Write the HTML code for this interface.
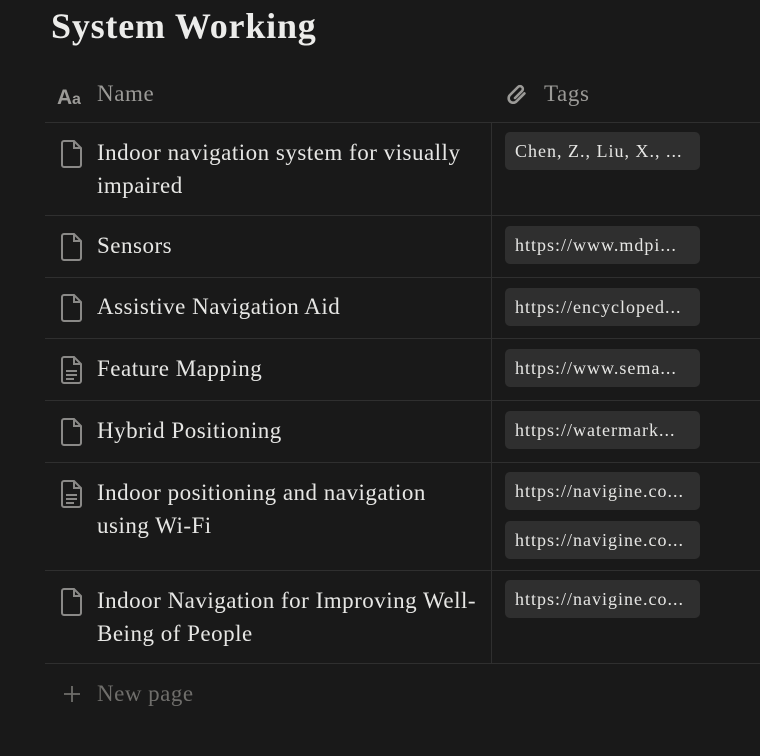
<!DOCTYPE html>
<html><head><style>
body{margin:0;background:#191919;width:760px;height:756px;overflow:hidden;font-family:"Liberation Serif",serif;color:#e6e6e4;position:relative}
.abs{position:absolute}
.title{left:51px;top:5px;font-size:36px;letter-spacing:0.8px;font-weight:bold;color:#ececea}
.hl{left:45px;right:0;height:1px;background:#2f2f2f}
.vl{left:491px;width:1px;background:#2f2f2f;top:123px;height:540px}
.hdr{font-size:23px;letter-spacing:0.6px;color:#9b9a97}
.name{left:97px;font-size:23px;letter-spacing:0.5px;line-height:33px;width:390px}
.pill{left:505px;width:195px;height:38px;background:#2f2f2f;border-radius:5px;font-size:18px;letter-spacing:1px;line-height:38px;padding-left:10px;box-sizing:border-box;color:#e6e6e4;white-space:nowrap;overflow:hidden}
svg.doc{position:absolute;left:61px}
</style></head><body>
<div class="abs title">System Working</div>
<svg class="abs" style="left:57px;top:85px" width="30" height="22" viewBox="0 0 30 22"><text x="0" y="19" font-family="Liberation Sans" font-weight="bold" font-size="21" fill="#9b9a97">A</text><text x="15" y="19" font-family="Liberation Sans" font-weight="bold" font-size="16" fill="#9b9a97">a</text></svg>
<div class="abs hdr" style="left:97px;top:81px">Name</div>
<svg class="abs" style="left:505px;top:82px" width="26" height="26" viewBox="0 0 26 26"><path d="M10 16l7-7a2.8 2.8 0 0 0-4-4l-8 8a4.5 4.5 0 0 0 6.4 6.4l8-8" fill="none" stroke="#9b9a97" stroke-width="2.6" stroke-linecap="round"/></svg>
<div class="abs hdr" style="left:544px;top:81px">Tags</div>
<div class="abs hl" style="top:122px"></div>
<div class="abs vl"></div>

<svg class="doc" style="top:140px" width="22" height="28" viewBox="0 0 22 28"><path d="M3 1h10l7 7v17a2 2 0 0 1-2 2H3a2 2 0 0 1-2-2V3a2 2 0 0 1 2-2zM13 1v7h7" fill="none" stroke="#8a8987" stroke-width="2"/></svg>
<div class="abs name" style="top:136px">Indoor navigation system for visually impaired</div>
<div class="abs pill" style="top:132px">Chen, Z., Liu, X., ...</div>
<div class="abs hl" style="top:215px"></div>

<svg class="doc" style="top:233px" width="22" height="28" viewBox="0 0 22 28"><path d="M3 1h10l7 7v17a2 2 0 0 1-2 2H3a2 2 0 0 1-2-2V3a2 2 0 0 1 2-2zM13 1v7h7" fill="none" stroke="#8a8987" stroke-width="2"/></svg>
<div class="abs name" style="top:229px">Sensors</div>
<div class="abs pill" style="top:226px">https://www.mdpi...</div>
<div class="abs hl" style="top:277px"></div>

<svg class="doc" style="top:294px" width="22" height="28" viewBox="0 0 22 28"><path d="M3 1h10l7 7v17a2 2 0 0 1-2 2H3a2 2 0 0 1-2-2V3a2 2 0 0 1 2-2zM13 1v7h7" fill="none" stroke="#8a8987" stroke-width="2"/></svg>
<div class="abs name" style="top:290px">Assistive Navigation Aid</div>
<div class="abs pill" style="top:288px">https://encycloped...</div>
<div class="abs hl" style="top:338px"></div>

<svg class="doc" style="top:356px" width="22" height="28" viewBox="0 0 22 28"><path d="M3 1h10l7 7v17a2 2 0 0 1-2 2H3a2 2 0 0 1-2-2V3a2 2 0 0 1 2-2zM13 1v7h7M5 15h11M5 19h11M5 23h8" fill="none" stroke="#8a8987" stroke-width="2"/></svg>
<div class="abs name" style="top:352px">Feature Mapping</div>
<div class="abs pill" style="top:349px">https://www.sema...</div>
<div class="abs hl" style="top:400px"></div>

<svg class="doc" style="top:418px" width="22" height="28" viewBox="0 0 22 28"><path d="M3 1h10l7 7v17a2 2 0 0 1-2 2H3a2 2 0 0 1-2-2V3a2 2 0 0 1 2-2zM13 1v7h7" fill="none" stroke="#8a8987" stroke-width="2"/></svg>
<div class="abs name" style="top:414px">Hybrid Positioning</div>
<div class="abs pill" style="top:411px">https://watermark...</div>
<div class="abs hl" style="top:462px"></div>

<svg class="doc" style="top:480px" width="22" height="28" viewBox="0 0 22 28"><path d="M3 1h10l7 7v17a2 2 0 0 1-2 2H3a2 2 0 0 1-2-2V3a2 2 0 0 1 2-2zM13 1v7h7M5 15h11M5 19h11M5 23h8" fill="none" stroke="#8a8987" stroke-width="2"/></svg>
<div class="abs name" style="top:476px">Indoor positioning and navigation<br>using Wi-Fi</div>
<div class="abs pill" style="top:472px">https://navigine.co...</div>
<div class="abs pill" style="top:521px">https://navigine.co...</div>
<div class="abs hl" style="top:570px"></div>

<svg class="doc" style="top:588px" width="22" height="28" viewBox="0 0 22 28"><path d="M3 1h10l7 7v17a2 2 0 0 1-2 2H3a2 2 0 0 1-2-2V3a2 2 0 0 1 2-2zM13 1v7h7" fill="none" stroke="#8a8987" stroke-width="2"/></svg>
<div class="abs name" style="top:584px">Indoor Navigation for Improving Well-<br>Being of People</div>
<div class="abs pill" style="top:580px">https://navigine.co...</div>
<div class="abs hl" style="top:663px"></div>

<svg class="abs" style="left:63px;top:685px" width="18" height="18" viewBox="0 0 18 18"><path d="M9 1v16M1 9h16" stroke="#6f6e6b" stroke-width="1.8"/></svg>
<div class="abs" style="left:97px;top:681px;font-size:23px;letter-spacing:0.5px;color:#6f6e6b">New page</div>
</body></html>
